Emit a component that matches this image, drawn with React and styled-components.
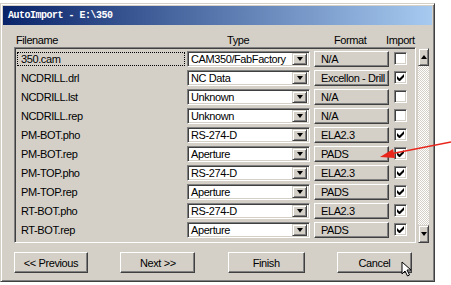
import React from 'react'
import styled, { createGlobalStyle } from 'styled-components'

const GlobalStyle = createGlobalStyle`
  body {
    margin: 0;
    background: #fff;
    font-family: "Liberation Sans", Arial, sans-serif;
    font-size: 11px;
    letter-spacing: -0.4px;
    color: #000;
  }
`

const Page = styled.div`
  position: relative;
  width: 451px;
  height: 285px;
  padding-top: 3px;
  box-sizing: border-box;
`

const Window = styled.div`
  width: 435px;
  height: 279px;
  box-sizing: border-box;
  background: #d4d0c8;
  border: 1px solid;
  border-color: #d4d0c8 #404040 #404040 #d4d0c8;
  box-shadow: inset 1px 1px #fff, inset -1px -1px #808080;
  padding: 2px;
  display: flex;
  flex-direction: column;
`

const TitleBar = styled.div`
  height: 19px;
  background: linear-gradient(to right, #0a246a, #a6caf0);
  color: #fff;
  font-family: "Liberation Mono", "DejaVu Sans Mono", monospace;
  font-weight: bold;
  font-size: 10px;
  letter-spacing: -0.5px;
  display: flex;
  align-items: center;
  padding-left: 5px;
`

const Body = styled.div`
  padding: 7px 0 0 11px;
  display: flex;
  flex-direction: column;
`

const Header = styled.div`
  height: 15px;
  display: flex;
  align-items: center;
  padding-left: 2px;
`

const HeadCell = styled.div`
  width: ${p => p.$w}px;
  padding-left: ${p => p.$pad || 0}px;
  box-sizing: border-box;
`

const ListArea = styled.div`
  display: flex;
  gap: 2px;
  height: 196px;
`

const ListBox = styled.div`
  width: 402px;
  box-sizing: border-box;
  border: 1px solid;
  border-color: #808080 #fff #fff #808080;
  box-shadow: inset 1px 1px #404040, inset -1px -1px #d4d0c8;
  padding: 1px 2px 0 2px;
`

const Row = styled.div`
  height: 19px;
  display: flex;
  align-items: center;
`

const NameCell = styled.div`
  width: 168px;
  height: 14px;
  box-sizing: border-box;
  padding-left: 3px;
  display: flex;
  align-items: center;
  border: 1px ${p => (p.$focus ? 'dotted #000' : 'solid transparent')};
  margin-right: 2px;
`

const Combo = styled.div`
  width: 123px;
  height: 16px;
  box-sizing: border-box;
  background: #fff;
  border: 1px solid;
  border-color: #808080 #fff #fff #808080;
  box-shadow: inset 1px 1px #404040, inset -1px -1px #d4d0c8;
  padding: 2px;
  display: flex;
  align-items: center;
  margin-right: 4px;
`

const ComboText = styled.div`
  flex: 1;
  padding-left: 1px;
  white-space: nowrap;
  overflow: hidden;
`

const DropButton = styled.div`
  width: 15px;
  height: 12px;
  box-sizing: border-box;
  background: #d4d0c8;
  border: 1px solid;
  border-color: #d4d0c8 #404040 #404040 #d4d0c8;
  box-shadow: inset 1px 1px #fff, inset -1px -1px #808080;
  display: flex;
  align-items: center;
  justify-content: center;
`

const Arrow = styled.div`
  width: 0;
  height: 0;
  border-left: 3.5px solid transparent;
  border-right: 3.5px solid transparent;
  border-${p => (p.$up ? 'bottom' : 'top')}: 4px solid #000;
`

const FormatButton = styled.div`
  width: 75px;
  height: 16px;
  box-sizing: border-box;
  background: #d4d0c8;
  border: 1px solid;
  border-color: #fff #404040 #404040 #fff;
  box-shadow: inset -1px -1px #808080;
  padding-left: 6px;
  display: flex;
  align-items: center;
  white-space: nowrap;
  overflow: hidden;
  margin-right: 5px;
`

const CheckBox = styled.div`
  width: 13px;
  height: 13px;
  box-sizing: border-box;
  background: #fff;
  border: 1px solid;
  border-color: #808080 #fff #fff #808080;
  box-shadow: inset 1px 1px #404040, inset -1px -1px #d4d0c8;
  display: flex;
  align-items: center;
  justify-content: center;
`

const ScrollBar = styled.div`
  width: 11px;
  margin-top: 1px;
  height: 195px;
  display: flex;
  flex-direction: column;
  background: repeating-conic-gradient(#fff 0 25%, #d4d0c8 0 50%) 0 0 / 2px 2px;
`

const ScrollButton = styled.div`
  height: 18px;
  box-sizing: border-box;
  background: #d4d0c8;
  border: 1px solid;
  border-color: #d4d0c8 #404040 #404040 #d4d0c8;
  box-shadow: inset 1px 1px #fff, inset -1px -1px #808080;
  display: flex;
  align-items: center;
  justify-content: center;
`

const Track = styled.div`
  flex: 1;
`

const Buttons = styled.div`
  margin-top: 9px;
  width: 398px;
  display: flex;
  justify-content: space-between;
`

const Button = styled.div`
  width: ${p => p.$w || 75}px;
  height: 21px;
  box-sizing: border-box;
  background: #d4d0c8;
  border: 1px solid;
  border-color: #fff #404040 #404040 #fff;
  box-shadow: inset -1px -1px #808080;
  display: flex;
  align-items: center;
  justify-content: center;
`

const Overlay = styled.svg`
  position: absolute;
  left: ${p => p.$x}px;
  top: ${p => p.$y}px;
  overflow: visible;
`

const files = [
  ['350.cam', 'CAM350/FabFactory', 'N/A', false],
  ['NCDRILL.drl', 'NC Data', 'Excellon - Drill', true],
  ['NCDRILL.lst', 'Unknown', 'N/A', false],
  ['NCDRILL.rep', 'Unknown', 'N/A', false],
  ['PM-BOT.pho', 'RS-274-D', 'ELA2.3', true],
  ['PM-BOT.rep', 'Aperture', 'PADS', true],
  ['PM-TOP.pho', 'RS-274-D', 'ELA2.3', true],
  ['PM-TOP.rep', 'Aperture', 'PADS', true],
  ['RT-BOT.pho', 'RS-274-D', 'ELA2.3', true],
  ['RT-BOT.rep', 'Aperture', 'PADS', true],
]

const Check = () => (
  <svg width="7" height="7" viewBox="0 0 7 7">
    <path d="M0 2v3l2 2h1l4-4V0L2.5 4.5z" fill="#000" />
  </svg>
)

export default function App() {
  return (
    <Page>
      <GlobalStyle />
      <Window>
        <TitleBar>AutoImport - E:\350</TitleBar>
        <Body>
          <Header>
            <HeadCell $w={170}>Filename</HeadCell>
            <HeadCell $w={127} $pad={41}>Type</HeadCell>
            <HeadCell $w={73} $pad={21}>Format</HeadCell>
            <HeadCell $w={30}>Import</HeadCell>
          </Header>
          <ListArea>
            <ListBox>
              {files.map(([name, type, format, checked], i) => (
                <Row key={i}>
                  <NameCell $focus={i === 0}>{name}</NameCell>
                  <Combo>
                    <ComboText>{type}</ComboText>
                    <DropButton><Arrow /></DropButton>
                  </Combo>
                  <FormatButton>{format}</FormatButton>
                  <CheckBox>{checked && <Check />}</CheckBox>
                </Row>
              ))}
            </ListBox>
            <ScrollBar>
              <ScrollButton><Arrow $up /></ScrollButton>
              <Track />
              <ScrollButton><Arrow /></ScrollButton>
            </ScrollBar>
          </ListArea>
          <Buttons>
            <Button $w={74}>&lt;&lt; Previous</Button>
            <Button>Next &gt;&gt;</Button>
            <Button $w={77}>Finish</Button>
            <Button>Cancel</Button>
          </Buttons>
        </Body>
      </Window>
      <Overlay $x={378} $y={138} width="73" height="22">
        <line x1="73" y1="4" x2="12" y2="16" stroke="#e8261c" strokeWidth="1.3" />
        <polygon points="2,19 15,11 17,20" fill="#e8261c" />
      </Overlay>
      <Overlay $x={401} $y={261} width="10" height="16">
        <path d="M1 1v12l3-3 2.5 5 2-1-2.5-5h4z" fill="#fff" stroke="#000" strokeWidth="1" strokeLinejoin="miter" />
      </Overlay>
    </Page>
  )
}
